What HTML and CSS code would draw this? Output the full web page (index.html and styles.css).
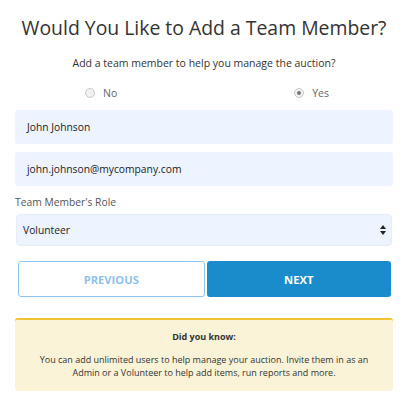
FILE: index.html
```html
<!DOCTYPE html>
<html>
<head>
<meta charset="utf-8">
<link rel="stylesheet" href="styles.css">
</head>
<body>
<div class="page">
  <h1 class="title">Would You Like to Add a Team Member?</h1>
  <p class="subtitle">Add a team member to help you manage the auction?</p>
  <div class="radios">
    <label class="radio radio-no"><span class="dot"></span>No</label>
    <label class="radio radio-yes"><span class="dot checked"></span>Yes</label>
  </div>
  <div class="field">John Johnson</div>
  <div class="field">john.johnson@mycompany.com</div>
  <div class="label">Team Member's Role</div>
  <div class="select">
    <span>Volunteer</span>
    <svg class="arrows" width="6" height="10" viewBox="0 0 6 10"><path d="M3 0 L6 4 L0 4 Z M0 6 L6 6 L3 10 Z" fill="#222"/></svg>
  </div>
  <div class="buttons">
    <div class="btn btn-prev">PREVIOUS</div>
    <div class="btn btn-next">NEXT</div>
  </div>
  <div class="tip">
    <div class="tip-title">Did you know:</div>
    <div class="tip-text">You can add unlimited users to help manage your auction. Invite them in as an Admin or a Volunteer to help add items, run reports and more.</div>
  </div>
</div>
</body>
</html>
```
FILE: styles.css
```css
* { box-sizing: border-box; }
html, body { margin: 0; padding: 0; background: #fff; }
body { font-family: "Open Sans", sans-serif; color: #333; }
.page { padding: 0 14px 0 15px; width: 407px; }
.title {
  margin: 0; padding-top: 14px; white-space: nowrap;
  font-size: 19.4px; font-weight: 400; line-height: 28px;
  text-align: center; color: #333;
}
.subtitle {
  margin: 13px 0 0; font-size: 10.5px; line-height: 16px;
  text-align: center; color: #333;
}
.radios {
  display: flex; height: 16px; margin-top: 14px;
  font-size: 10.5px; line-height: 16px; color: #666;
}
.radio { display: flex; align-items: center; }
.radio-no { margin-left: 70px; }
.radio-yes { margin-left: 177px; }
.dot {
  width: 10px; height: 10px; border-radius: 50%;
  border: 1px solid #c8c8c8; background: #f2f2f2; margin-right: 8px;
  position: relative;
}
.dot.checked::after {
  content: ""; position: absolute; left: 2px; top: 2px;
  width: 4px; height: 4px; border-radius: 50%; background: #777;
}
.field {
  height: 34px; margin-top: 9px; background: #edf4ff; border-radius: 3px;
  padding-left: 12px; font-size: 10.3px; line-height: 34px; color: #222;
}
.field + .field { margin-top: 8px; }
.label { margin-top: 8px; font-size: 10.3px; line-height: 16px; color: #555; }
.select {
  margin: 4px 1px 0; height: 32px; background: #edf4ff; border-radius: 4px;
  border: 1px solid #e6edf7;
  display: flex; align-items: center; justify-content: space-between;
  padding: 0 5px 0 6px; font-size: 10.3px; color: #222;
}
.buttons { display: flex; gap: 2px; margin: 15px 2px 0 3px; }
.btn {
  flex: 1; height: 36px; border-radius: 3px;
  display: flex; align-items: center; justify-content: center;
  font-size: 11.2px; font-weight: 700;
}
.btn-prev { border: 1px solid #8ec5f0; color: #8ec1f0; background: #fff; }
.btn-next { background: #1a8bcb; color: #fff; }
.tip {
  margin-top: 21px; background: #fbf3d7; border-top: 2px solid #f2c232;
  border-radius: 3px; padding: 10px 20px 12px; text-align: center;
  font-size: 9px; color: #333;
}
.tip-title { font-weight: 700; line-height: 13px; }
.tip-text { margin-top: 10px; line-height: 13px; }
```
